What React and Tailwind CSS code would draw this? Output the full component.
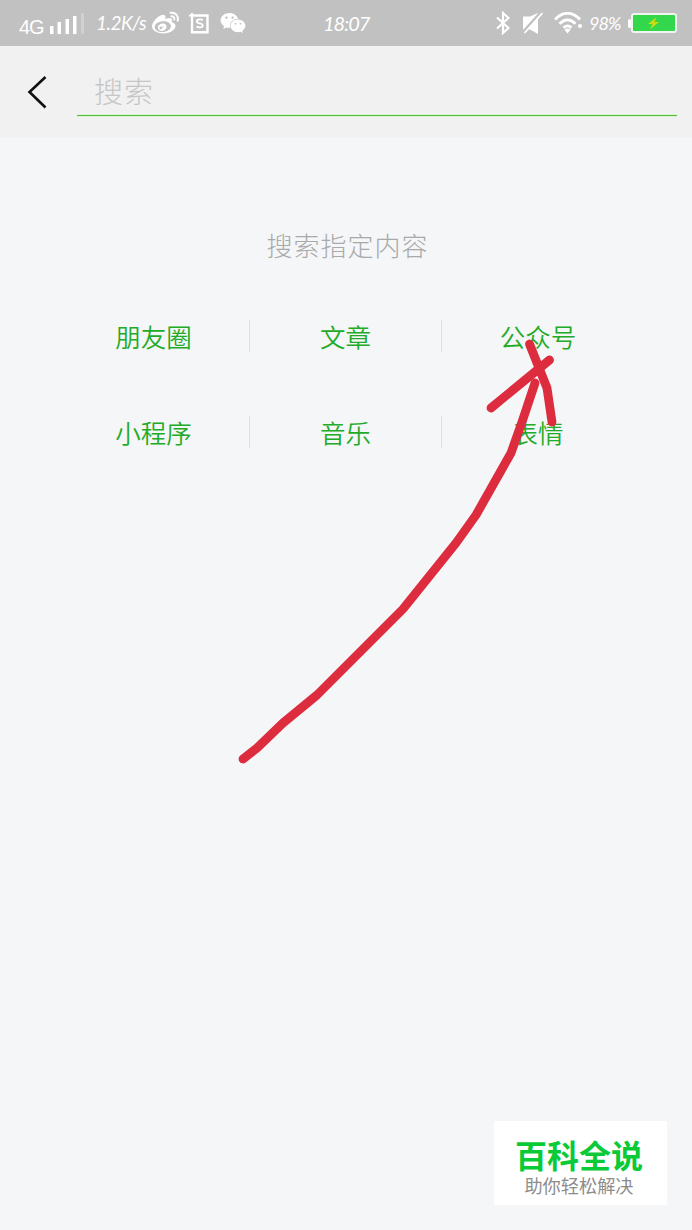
import React from 'react';
import { FaWeibo, FaWeixin } from 'react-icons/fa';

const CATEGORIES = ['朋友圈', '文章', '公众号', '小程序', '音乐', '表情'];

const cjkFont = "font-['Noto_Sans_CJK_SC',sans-serif]";
const scriptFont = "font-['Lato','Noto_Sans_CJK_SC',sans-serif] italic";

function SignalBars() {
  return (
    <svg className="ml-[6px] mt-[13px] h-[22px] w-[34px] shrink-0" viewBox="0 0 34 22" fill="#fff">
      <rect x="0" y="13" width="3.5" height="8" />
      <rect x="7.5" y="9" width="3.5" height="12" />
      <rect x="15.5" y="6" width="3.5" height="15" />
      <rect x="23" y="3" width="3.5" height="18" />
      <rect x="31" y="0" width="3" height="21" opacity="0.25" />
    </svg>
  );
}

function InputMethodIcon() {
  return (
    <svg className="ml-[10px] mt-[13px] h-[21px] w-[21px] shrink-0" viewBox="0 0 21 21" fill="none" stroke="#fff">
      <path d="M3 2.5h15.5v16.7H3z" strokeWidth="2.4" />
      <path d="M0 2.5h3M3 0v3" strokeWidth="2" />
      <path d="M13.8 7.2c-1-.9-6-1.4-6 1.2 0 2.7 6 1.4 6 4.1 0 2.4-4.9 2.3-6.3.9" strokeWidth="1.8" />
    </svg>
  );
}

function BluetoothIcon() {
  return (
    <svg className="mt-[11px] h-[24px] w-[14px] shrink-0" viewBox="0 0 14 24" fill="none" stroke="#fff" strokeWidth="2.2">
      <path d="M1 6.5 12.5 17 7 22V2l5.5 5L1 17.5" />
    </svg>
  );
}

function MutedIcon() {
  return (
    <svg className="ml-[13px] mt-[12px] h-[22px] w-[20px] shrink-0" viewBox="0 0 20 22">
      <path d="M0 4.5h7L15 1v21l-8-4.5H0z" fill="#fff" />
      <path d="M-.5 20.5 18 0" stroke="#c1c1c1" strokeWidth="2.6" />
      <path d="M1.5 21 19.5 1" stroke="#fff" strokeWidth="1.8" />
    </svg>
  );
}

function WifiIcon() {
  return (
    <svg className="ml-[11px] mt-[12px] h-[22px] w-[29px] shrink-0" viewBox="0 0 29 22" fill="none" stroke="#fff" strokeWidth="2.8">
      <path d="M1 7.5C8.5-.8 18.5-.8 26 7.5" />
      <path d="M5.5 11.8c5-5.3 11-5.3 16 0" />
      <path d="M9.5 15.8c2.7-2.7 5.3-2.7 8 0" />
      <path d="M10.3 17.5c2-1.5 4.4-1.5 6.4 0l-3.2 4z" fill="#fff" stroke="none" />
      <circle cx="26" cy="14" r="2" fill="#fff" stroke="none" />
    </svg>
  );
}

function BatteryIcon() {
  return (
    <svg className="mt-[13px] h-[20px] w-[50px] shrink-0" viewBox="0 0 50 20">
      <rect x="0" y="6" width="3" height="9" rx="1.5" fill="#fff" />
      <rect x="4" y="1" width="44" height="18" rx="2" fill="#32d74b" stroke="#f1f5f1" strokeWidth="2" />
      <path d="M28.5 4 20 11h4.5L22 16.500l9-7.500h-4.500z" fill="#c8dc12" />
    </svg>
  );
}

function StatusBar() {
  return (
    <div className="flex h-[46px] w-full items-start bg-[#c1c1c1] text-white">
      <div className="flex w-[323px] shrink-0 items-start pl-[19px]">
        <span className="mt-[14px] w-[25px] font-['Liberation_Sans',sans-serif] text-[20px] leading-[26px] tracking-[-1.2px]">4G</span>
        <SignalBars />
        <span className={`${scriptFont} ml-[12px] mt-[10px] w-[50px] whitespace-nowrap text-[19px] leading-[26px] tracking-[-0.5px]`}>1.2K/s</span>
        <FaWeibo className="ml-[6px] mt-[10px] h-[27px] w-[27px] shrink-0" />
        <InputMethodIcon />
        <FaWeixin className="ml-[10px] mt-[10px] h-[26px] w-[26px] shrink-0" />
      </div>
      <span className={`${scriptFont} mt-[10px] w-[173px] shrink-0 text-[20px] leading-[27px] tracking-[-1px]`}>18:07</span>
      <BluetoothIcon />
      <MutedIcon />
      <WifiIcon />
      <span className={`${scriptFont} ml-[6px] mt-[10px] w-[39px] shrink-0 text-[18px] leading-[26px] tracking-[-1px]`}>98%</span>
      <BatteryIcon />
    </div>
  );
}

function SearchHeader() {
  return (
    <header className="flex h-[92px] bg-[#f1f1f1] pr-[15px]">
      <button className="ml-[27px] mt-[29px] h-[34px] w-[50px] shrink-0" aria-label="返回">
        <svg className="h-[34px] w-[20px]" viewBox="0 0 20 34" fill="none" stroke="#111" strokeWidth="2.6">
          <path d="M18.5 2 2.5 17l16 15.5" />
        </svg>
      </button>
      <div className="mt-[22px] flex-1">
        <div className={`${cjkFont} h-[46px] pl-[17px] text-[29px] font-light leading-[44px] tracking-[1px] text-[#c6c6c6]`}>
          搜索
        </div>
        <div className="h-[3px] border-y border-[#d6f7c8] bg-[#5fb44b]" />
      </div>
    </header>
  );
}

// Trazo rojo a mano alzada que señala la opción de cuentas oficiales.
function HandDrawnArrow() {
  return (
    <svg
      className="pointer-events-none absolute left-0 top-0 h-[1230px] w-[692px]"
      viewBox="0 0 692 1230"
      fill="none"
      stroke="#dd2c3e"
      strokeWidth="8.8"
      strokeLinecap="round"
      strokeLinejoin="round"
    >
      <path d="M243 759 257 748 283 723 317 695 403 609 456 543 476 515 511 453 522 422 535 383" />
      <path d="M491 408 549.5 360" />
      <path d="M529.5 344 547 388 552 422" />
    </svg>
  );
}

export default function App() {
  return (
    <div className="relative flex h-[1230px] w-[692px] flex-col overflow-hidden bg-[#f5f6f8]">
      <StatusBar />
      <SearchHeader />

      <main className={`${cjkFont} flex flex-1 flex-col`}>
        <h1 className="mt-[87px] pl-[3px] text-center text-[26px] font-light leading-[40px] tracking-[1px] text-[#a9a9a9]">
          搜索指定内容
        </h1>
        <div className="ml-[58px] mt-[23px] grid w-[576px] grid-cols-3">
          {CATEGORIES.map((name, i) => (
            <div key={name} className="flex h-[96px] items-center">
              <span className="flex-1 text-center text-[25.5px] font-[350] leading-[32px] text-[#22ab27]">{name}</span>
              {i % 3 !== 2 && <span className="h-[32px] w-px bg-[#dfe1e3]" />}
            </div>
          ))}
        </div>

        <div className="mb-[25px] ml-auto mr-[25px] mt-auto flex h-[84px] w-[173px] flex-col items-center bg-white pr-[3px]">
          <span className="mt-[17px] text-[32px] font-bold leading-[32px] text-[#0acb37]">百科全说</span>
          <span className="mt-[6px] text-[18.2px] leading-[18px] text-[#8c8c8c]">助你轻松解决</span>
        </div>
      </main>

      <HandDrawnArrow />
    </div>
  );
}
